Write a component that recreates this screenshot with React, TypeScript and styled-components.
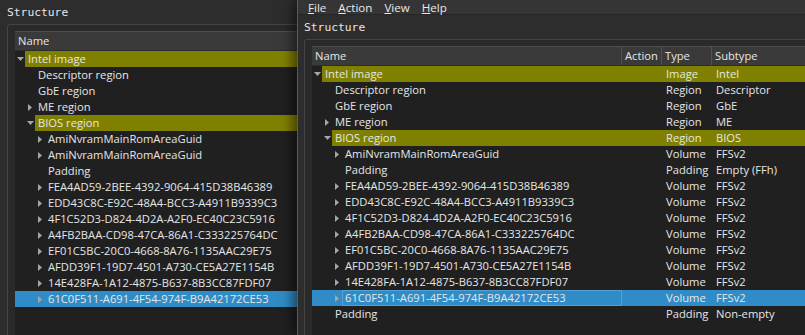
import React from 'react';
import styled, { createGlobalStyle, css } from 'styled-components';

type Arrow = 'none' | 'open' | 'closed';
interface TreeNode {
  level: number;
  arrow: Arrow;
  name: string;
  type?: string;
  subtype?: string;
  mark?: 'olive' | 'selected';
}

const backNodes: TreeNode[] = [
  { level: 0, arrow: 'open', name: 'Intel image', mark: 'olive' },
  { level: 1, arrow: 'none', name: 'Descriptor region' },
  { level: 1, arrow: 'none', name: 'GbE region' },
  { level: 1, arrow: 'closed', name: 'ME region' },
  { level: 1, arrow: 'open', name: 'BIOS region', mark: 'olive' },
  { level: 2, arrow: 'closed', name: 'AmiNvramMainRomAreaGuid' },
  { level: 2, arrow: 'closed', name: 'AmiNvramMainRomAreaGuid' },
  { level: 2, arrow: 'none', name: 'Padding' },
  { level: 2, arrow: 'closed', name: 'FEA4AD59-2BEE-4392-9064-415D38B46389' },
  { level: 2, arrow: 'closed', name: 'EDD43C8C-E92C-48A4-BCC3-A4911B9339C3' },
  { level: 2, arrow: 'closed', name: '4F1C52D3-D824-4D2A-A2F0-EC40C23C5916' },
  { level: 2, arrow: 'closed', name: 'A4FB2BAA-CD98-47CA-86A1-C333225764DC' },
  { level: 2, arrow: 'closed', name: 'EF01C5BC-20C0-4668-8A76-1135AAC29E75' },
  { level: 2, arrow: 'closed', name: 'AFDD39F1-19D7-4501-A730-CE5A27E1154B' },
  { level: 2, arrow: 'closed', name: '14E428FA-1A12-4875-B637-8B3CC87FDF07' },
  { level: 2, arrow: 'closed', name: '61C0F511-A691-4F54-974F-B9A42172CE53', mark: 'selected' },
];

const frontNodes: TreeNode[] = [
  { level: 0, arrow: 'open', name: 'Intel image', type: 'Image', subtype: 'Intel', mark: 'olive' },
  { level: 1, arrow: 'none', name: 'Descriptor region', type: 'Region', subtype: 'Descriptor' },
  { level: 1, arrow: 'none', name: 'GbE region', type: 'Region', subtype: 'GbE' },
  { level: 1, arrow: 'closed', name: 'ME region', type: 'Region', subtype: 'ME' },
  { level: 1, arrow: 'open', name: 'BIOS region', type: 'Region', subtype: 'BIOS', mark: 'olive' },
  { level: 2, arrow: 'closed', name: 'AmiNvramMainRomAreaGuid', type: 'Volume', subtype: 'FFSv2' },
  { level: 2, arrow: 'none', name: 'Padding', type: 'Padding', subtype: 'Empty (FFh)' },
  { level: 2, arrow: 'closed', name: 'FEA4AD59-2BEE-4392-9064-415D38B46389', type: 'Volume', subtype: 'FFSv2' },
  { level: 2, arrow: 'closed', name: 'EDD43C8C-E92C-48A4-BCC3-A4911B9339C3', type: 'Volume', subtype: 'FFSv2' },
  { level: 2, arrow: 'closed', name: '4F1C52D3-D824-4D2A-A2F0-EC40C23C5916', type: 'Volume', subtype: 'FFSv2' },
  { level: 2, arrow: 'closed', name: 'A4FB2BAA-CD98-47CA-86A1-C333225764DC', type: 'Volume', subtype: 'FFSv2' },
  { level: 2, arrow: 'closed', name: 'EF01C5BC-20C0-4668-8A76-1135AAC29E75', type: 'Volume', subtype: 'FFSv2' },
  { level: 2, arrow: 'closed', name: 'AFDD39F1-19D7-4501-A730-CE5A27E1154B', type: 'Volume', subtype: 'FFSv2' },
  { level: 2, arrow: 'closed', name: '14E428FA-1A12-4875-B637-8B3CC87FDF07', type: 'Volume', subtype: 'FFSv2' },
  { level: 2, arrow: 'closed', name: '61C0F511-A691-4F54-974F-B9A42172CE53', type: 'Volume', subtype: 'FFSv2', mark: 'selected' },
  { level: 1, arrow: 'none', name: 'Padding', type: 'Padding', subtype: 'Non-empty' },
];

const UI_FONT = `"Open Sans", "Noto Sans", sans-serif`;
const OLIVE = '#808000';
const BLUE = '#308cc6';

const Global = createGlobalStyle`
  html, body { margin: 0; padding: 0; background: #2d2d2d; overflow: hidden; }
  #root { width: 805px; height: 335px; }
`;

const Desktop = styled.div`
  display: flex;
  width: 805px;
  height: 335px;
  overflow: hidden;
  font-family: ${UI_FONT};
  font-size: 11.2px;
  color: #e6e6e6;
`;

const Window = styled.div<{ $front?: boolean }>`
  display: flex;
  flex-direction: column;
  min-width: 0;
  overflow: hidden;
  background: #2d2d2d;
  box-sizing: border-box;
  border-left: 1px solid ${(p) => (p.$front ? '#e0202c' : '#2d2d2d')};
  ${(p) =>
    p.$front
      ? css`
          flex: 1;
          position: relative;
          z-index: 1;
          box-shadow: -4px 0 12px rgba(0, 0, 0, 0.55);
        `
      : css`
          width: 297px;
          flex: none;
        `}
`;

const MenuBar = styled.div`
  display: flex;
  align-items: flex-start;
  height: 15px;
  padding: 1px 0 0 4px;
  box-sizing: border-box;
  background: #353535;
  border-bottom: 1px solid #262626;
  flex: none;
`;

const MenuItem = styled.span`
  padding: 0 6px;
  font-size: 11.6px;
  line-height: 13px;
  color: #e8e8e8;
  white-space: nowrap;
  u {
    text-decoration-thickness: 1px;
    text-underline-offset: 1px;
  }
`;

const TitleRow = styled.div`
  height: 24px;
  flex: none;
  box-sizing: border-box;
  padding: 6px 0 0 6px;
  font-family: "DejaVu Sans Mono", "Liberation Mono", monospace;
  font-size: 11.3px;
  line-height: 14px;
  color: #e6e6e6;
`;

const GroupBox = styled.div`
  flex: 1;
  min-height: 0;
  display: flex;
  flex-direction: column;
  margin-left: 6px;
  padding: 6px 0 0 7px;
  border: 1px solid #444444;
  border-right: none;
  border-bottom: none;
  border-top-left-radius: 3px;
  background: #2a2a2a;
`;

const TreeView = styled.div`
  flex: 1;
  min-height: 0;
  display: flex;
  flex-direction: column;
  background: #202020;
  overflow: hidden;
`;

const HeaderRow = styled.div<{ $cols: string }>`
  display: grid;
  grid-template-columns: ${(p) => p.$cols};
  height: 20px;
  flex: none;
  box-sizing: border-box;
  background: #3a3a3a;
  border-top: 1px solid #4e4e4e;
  border-bottom: 1px solid #2c2c2c;
`;

const HeaderCell = styled.div`
  padding-left: 3px;
  line-height: 18px;
  color: #e6e6e6;
  white-space: nowrap;
  overflow: hidden;
  border-right: 1px solid #525252;
  &:last-child {
    border-right: none;
  }
`;

const Row = styled.div<{ $cols: string; $selected?: boolean }>`
  display: grid;
  grid-template-columns: ${(p) => p.$cols};
  height: 16px;
  flex: none;
  line-height: 16px;
  background: ${(p) => (p.$selected ? BLUE : 'transparent')};
`;

const NameCell = styled.div`
  display: flex;
  min-width: 0;
`;

const Indent = styled.span<{ $level: number }>`
  flex: none;
  width: ${(p) => p.$level * 10}px;
`;

const Expander = styled.span`
  flex: none;
  width: 10px;
  display: flex;
  align-items: center;
  justify-content: center;
`;

const Label = styled.span<{ $olive?: boolean; $focus?: boolean }>`
  flex: 1;
  min-width: 0;
  padding-left: 3px;
  white-space: nowrap;
  overflow: hidden;
  background: ${(p) => (p.$olive ? OLIVE : 'transparent')};
  ${(p) =>
    p.$focus &&
    css`
      box-shadow: inset 0 0 0 1px rgba(150, 200, 240, 0.35);
    `}
`;

const Cell = styled.span<{ $olive?: boolean }>`
  padding-left: 4px;
  white-space: nowrap;
  overflow: hidden;
  background: ${(p) => (p.$olive ? OLIVE : 'transparent')};
`;

const ArrowIcon: React.FC<{ kind: Arrow }> = ({ kind }) => {
  if (kind === 'open')
    return (
      <svg width="7" height="4" viewBox="0 0 7 4">
        <polygon points="0,0 7,0 3.5,4" fill="#a6a6a6" />
      </svg>
    );
  if (kind === 'closed')
    return (
      <svg width="4" height="7" viewBox="0 0 4 7">
        <polygon points="0,0 4,3.5 0,7" fill="#a6a6a6" />
      </svg>
    );
  return null;
};

const Tree: React.FC<{ nodes: TreeNode[]; columns: string[]; cols: string; focus?: boolean }> = ({
  nodes,
  columns,
  cols,
  focus,
}) => (
  <TreeView>
    <HeaderRow $cols={cols}>
      {columns.map((c) => (
        <HeaderCell key={c}>{c}</HeaderCell>
      ))}
    </HeaderRow>
    {nodes.map((n, i) => {
      const olive = n.mark === 'olive';
      const selected = n.mark === 'selected';
      return (
        <Row key={i} $cols={cols} $selected={selected}>
          <NameCell>
            <Indent $level={n.level} />
            <Expander>
              <ArrowIcon kind={n.arrow} />
            </Expander>
            <Label $olive={olive} $focus={focus && selected}>
              {n.name}
            </Label>
          </NameCell>
          {columns.length > 1 && (
            <>
              <Cell $olive={olive} />
              <Cell $olive={olive}>{n.type}</Cell>
              <Cell $olive={olive}>{n.subtype}</Cell>
            </>
          )}
        </Row>
      );
    })}
  </TreeView>
);

const Menu: React.FC<{ label: string }> = ({ label }) => (
  <MenuItem>
    <u>{label[0]}</u>
    {label.slice(1)}
  </MenuItem>
);

export default function App() {
  return (
    <>
      <Global />
      <Desktop>
        <Window>
          <TitleRow>Structure</TitleRow>
          <GroupBox>
            <Tree nodes={backNodes} columns={['Name']} cols="1fr" />
          </GroupBox>
        </Window>
        <Window $front>
          <MenuBar>
            <Menu label="File" />
            <Menu label="Action" />
            <Menu label="View" />
            <Menu label="Help" />
          </MenuBar>
          <TitleRow>Structure</TitleRow>
          <GroupBox>
            <Tree
              nodes={frontNodes}
              columns={['Name', 'Action', 'Type', 'Subtype']}
              cols="310px 40px 50px 1fr"
              focus
            />
          </GroupBox>
        </Window>
      </Desktop>
    </>
  );
}
